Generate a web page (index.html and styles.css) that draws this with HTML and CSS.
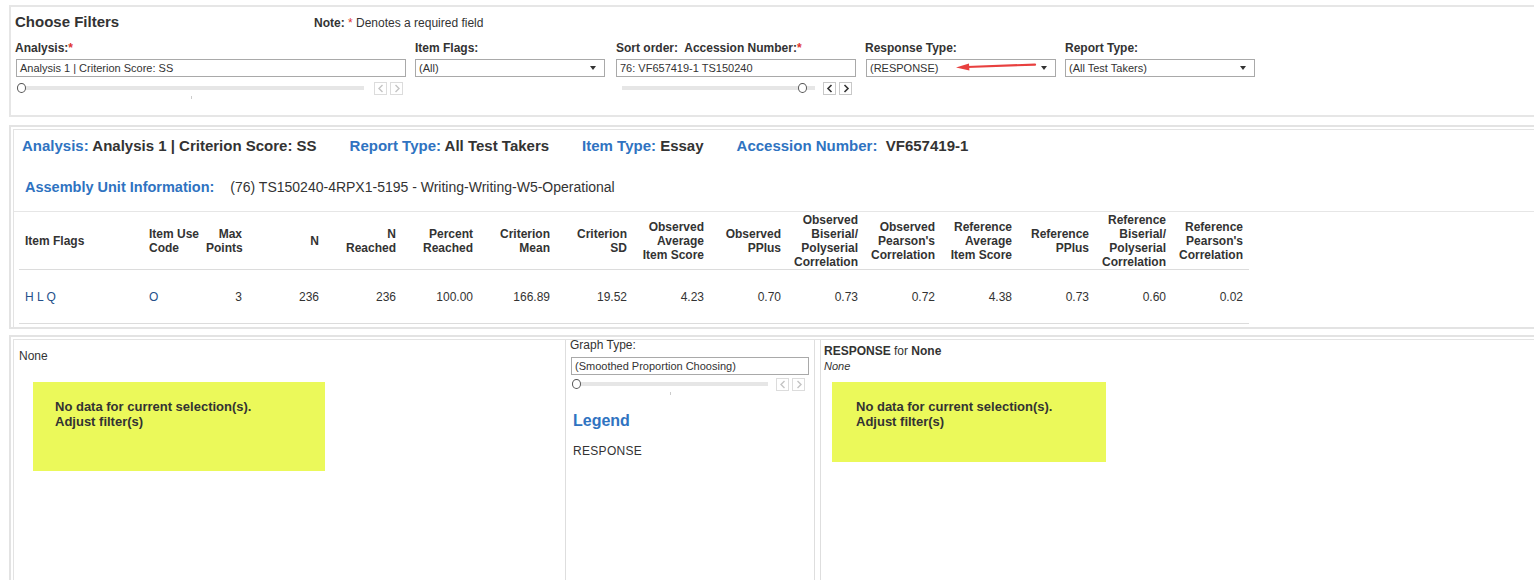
FILE: index.html
```html
<!DOCTYPE html>
<html>
<head>
<meta charset="utf-8">
<link rel="stylesheet" href="styles.css">
</head>
<body>
<div class="page">
  <section class="filters">
    <div class="filters-head">
      <h2 class="title">Choose Filters</h2>
      <span class="note"><b>Note:</b> <span class="req">*</span> Denotes a required field</span>
    </div>
    <div class="filter-row">
      <div class="fcol c1">
        <div class="flabel">Analysis:<span class="req">*</span></div>
        <div class="input w390">Analysis 1 | Criterion Score: SS</div>
        <div class="slider-row">
          <div class="track t1"><span class="knob"></span><span class="tick"></span></div>
          <div class="navbtns">
            <span class="nbtn dis"><svg width="8" height="9" viewBox="0 0 8 9"><polyline points="5.5,1 2,4.5 5.5,8" fill="none" stroke="#c4c4c4" stroke-width="1.4"/></svg></span>
            <span class="nbtn dis"><svg width="8" height="9" viewBox="0 0 8 9"><polyline points="2.5,1 6,4.5 2.5,8" fill="none" stroke="#c4c4c4" stroke-width="1.4"/></svg></span>
          </div>
        </div>
      </div>
      <div class="fcol c2">
        <div class="flabel">Item Flags:</div>
        <div class="input select w190">(All)</div>
      </div>
      <div class="fcol c3">
        <div class="flabel">Sort order:&nbsp; Accession Number:<span class="req">*</span></div>
        <div class="input w240">76: VF657419-1 TS150240</div>
        <div class="slider-row">
          <div class="track t3"><span class="knob end"></span></div>
          <div class="navbtns nb3">
            <span class="nbtn"><svg width="8" height="9" viewBox="0 0 8 9"><polyline points="5.5,1 2,4.5 5.5,8" fill="none" stroke="#333" stroke-width="1.6"/></svg></span>
            <span class="nbtn"><svg width="8" height="9" viewBox="0 0 8 9"><polyline points="2.5,1 6,4.5 2.5,8" fill="none" stroke="#333" stroke-width="1.6"/></svg></span>
          </div>
        </div>
      </div>
      <div class="fcol c4">
        <div class="flabel">Response Type:</div>
        <div class="input select w190 ml1">(RESPONSE)
          <svg class="red-arrow" width="82" height="12" viewBox="0 0 82 12"><line x1="12" y1="7" x2="80" y2="4.6" stroke="#e8403f" stroke-width="2.2" stroke-linecap="round"/><polygon points="1,7.4 14,3.6 14.4,10.4" fill="#e8403f"/></svg>
        </div>
      </div>
      <div class="fcol c5">
        <div class="flabel">Report Type:</div>
        <div class="input select w190">(All Test Takers)</div>
      </div>
    </div>
  </section>

  <section class="panel">
    <div class="panel-inner">
      <div class="summary">
        <span class="sitem"><span class="blue">Analysis:</span> Analysis 1 | Criterion Score: SS</span>
        <span class="sitem"><span class="blue">Report Type:</span> All Test Takers</span>
        <span class="sitem"><span class="blue">Item Type:</span> Essay</span>
        <span class="sitem"><span class="blue">Accession Number:</span>&nbsp; VF657419-1</span>
      </div>
      <div class="assembly">
        <span class="blue alabel">Assembly Unit Information:</span>
        <span class="avalue">(76) TS150240-4RPX1-5195 - Writing-Writing-W5-Operational</span>
      </div>
      <div class="sep"></div>
      <table class="stats">
        <colgroup>
          <col class="cw1"><col class="cw2"><col class="cw3">
          <col class="cw"><col class="cw"><col class="cw"><col class="cw"><col class="cw"><col class="cw"><col class="cw"><col class="cw"><col class="cw"><col class="cw"><col class="cw"><col class="cw"><col class="cw">
        </colgroup>
        <thead>
          <tr>
            <th class="left">Item Flags</th>
            <th class="left nopr">Item Use<br>Code</th>
            <th>Max<br>Points</th>
            <th>N</th>
            <th>N<br>Reached</th>
            <th>Percent<br>Reached</th>
            <th>Criterion<br>Mean</th>
            <th>Criterion<br>SD</th>
            <th>Observed<br>Average<br>Item Score</th>
            <th>Observed<br>PPlus</th>
            <th>Observed<br>Biserial/<br>Polyserial<br>Correlation</th>
            <th>Observed<br>Pearson's<br>Correlation</th>
            <th>Reference<br>Average<br>Item Score</th>
            <th>Reference<br>PPlus</th>
            <th>Reference<br>Biserial/<br>Polyserial<br>Correlation</th>
            <th>Reference<br>Pearson's<br>Correlation</th>
          </tr>
        </thead>
        <tbody>
          <tr>
            <td class="left link">H L Q</td>
            <td class="left link">O</td>
            <td>3</td>
            <td>236</td>
            <td>236</td>
            <td>100.00</td>
            <td>166.89</td>
            <td>19.52</td>
            <td>4.23</td>
            <td>0.70</td>
            <td>0.73</td>
            <td>0.72</td>
            <td>4.38</td>
            <td>0.73</td>
            <td>0.60</td>
            <td>0.02</td>
          </tr>
        </tbody>
      </table>
    </div>
  </section>

  <section class="panel panel3">
    <div class="panel-inner charts">
      <div class="ccol left-col">
        <div class="none">None</div>
        <div class="nodata nd1">No data for current selection(s).<br>Adjust filter(s)</div>
      </div>
      <div class="ccol mid-col">
        <div class="glabel">Graph Type:</div>
        <div class="input w238 ml1">(Smoothed Proportion Choosing)</div>
        <div class="slider-row">
          <div class="track tg"><span class="knob"></span><span class="tick"></span></div>
          <div class="navbtns nbg">
            <span class="nbtn dis"><svg width="8" height="9" viewBox="0 0 8 9"><polyline points="5.5,1 2,4.5 5.5,8" fill="none" stroke="#c4c4c4" stroke-width="1.4"/></svg></span>
            <span class="nbtn dis"><svg width="8" height="9" viewBox="0 0 8 9"><polyline points="2.5,1 6,4.5 2.5,8" fill="none" stroke="#c4c4c4" stroke-width="1.4"/></svg></span>
          </div>
        </div>
        <div class="legend">Legend</div>
        <div class="legend-item">RESPONSE</div>
      </div>
      <div class="ccol right-col">
        <div class="rtitle"><b>RESPONSE</b> for <b>None</b></div>
        <div class="rsub">None</div>
        <div class="nodata nd2">No data for current selection(s).<br>Adjust filter(s)</div>
      </div>
    </div>
  </section>
</div>
</body>
</html>
```

FILE: styles.css
```css
html, body {
  margin: 0;
  padding: 0;
  background: #fff;
  overflow: hidden;
}
body {
  font-family: "Liberation Sans", Arial, sans-serif;
  color: #333;
  width: 1534px;
  height: 580px;
}
.page {
  width: 1560px;
  padding: 5px 0 0 9px;
}

/* Filters panel */
.filters {
  box-sizing: border-box;
  height: 112px;
  border: 2px solid #e6e6e6;
  border-right: 0;
  padding: 6px 0 0 4px;
}
.filters-head {
  display: flex;
  align-items: baseline;
}
.title {
  margin: 0;
  width: 299px;
  font-size: 15px;
  line-height: 18px;
  font-weight: bold;
  color: #333;
}
.note {
  font-size: 12px;
  line-height: 14px;
}
.req { color: #e0342f; }
.filter-row {
  display: flex;
  margin-top: 10px;
}
.c1 { width: 400px; }
.c2 { width: 201px; }
.c3 { width: 249px; }
.c4 { width: 200px; }
.c5 { width: 200px; }
.flabel {
  font-size: 12px;
  line-height: 14px;
  font-weight: bold;
  margin-bottom: 4px;
}
.input {
  position: relative;
  box-sizing: border-box;
  height: 18px;
  border: 1px solid #a9a9a9;
  font-size: 11px;
  line-height: 16px;
  padding: 0 3px;
  color: #333;
  white-space: nowrap;
  background: #fff;
}
.w390 { width: 390px; margin-left: 1px; }
.w190 { width: 190px; }
.w240 { width: 240px; }
.w238 { width: 238px; }
.ml1 { margin-left: 1px; }
.select::after {
  content: "";
  position: absolute;
  right: 8px;
  top: 6px;
  border-left: 3.5px solid transparent;
  border-right: 3.5px solid transparent;
  border-top: 4px solid #333;
}
.red-arrow {
  position: absolute;
  left: 88px;
  top: 0;
}
.slider-row {
  display: flex;
  align-items: center;
  height: 14px;
  margin-top: 4px;
}
.track {
  position: relative;
  height: 4px;
  background: #e6e6e6;
}
.t1 { margin-left: 2px; width: 347px; }
.t3 { margin-left: 6px; width: 193px; }
.tg { margin-left: 6px; width: 196px; }
.knob {
  position: absolute;
  left: 0;
  top: -3px;
  box-sizing: border-box;
  width: 9px;
  height: 10px;
  border: 1px solid #555;
  border-radius: 50%;
  background: #fff;
}
.knob.end { left: 176px; }
.tick {
  position: absolute;
  left: 50%;
  top: 10px;
  width: 1px;
  height: 3px;
  background: #ccc;
}
.navbtns {
  display: flex;
  gap: 3px;
  margin-left: 10px;
}
.nb3 { margin-left: 8px; }
.nbg { margin-left: 8px; }
.nbtn {
  box-sizing: border-box;
  width: 13px;
  height: 13px;
  border: 1px solid #c8c8c8;
  display: flex;
  align-items: center;
  justify-content: center;
  background: #fff;
}
.nbtn.dis { border-color: #dcdcdc; }

/* Panels */
.panel {
  margin-top: 8px;
  border-top: 2px solid #e3e3e3;
  border-left: 2px solid #e3e3e3;
  border-bottom: 2px solid #e3e3e3;
}
.panel-inner {
  margin: 2px 0 0 2px;
  border-top: 1px solid #e3e3e3;
  border-left: 1px solid #e3e3e3;
  padding-bottom: 3px;
}
.summary {
  display: flex;
  gap: 33px;
  padding: 7px 0 0 8px;
  font-size: 15px;
  line-height: 18px;
  font-weight: bold;
  color: #333;
}
.blue { color: #2f73c1; }
.assembly {
  margin-top: 23px;
  padding-left: 11px;
  display: flex;
  align-items: baseline;
  line-height: 18px;
}
.alabel {
  font-size: 14.5px;
  font-weight: bold;
  margin-right: 16px;
}
.avalue {
  font-size: 14px;
  color: #333;
}
.sep {
  margin-top: 15px;
  height: 1px;
  background: #e6e6e6;
}
.stats {
  margin-left: 5px;
  border-collapse: collapse;
  table-layout: fixed;
  width: 1230px;
}
.cw1 { width: 124px; }
.cw2 { width: 57px; }
.cw3 { width: 48px; }
.cw { width: 77px; }
.stats th {
  height: 57px;
  padding: 0 6px;
  font-size: 12px;
  line-height: 14px;
  font-weight: bold;
  text-align: right;
  vertical-align: middle;
  border-bottom: 1px solid #dcdcdc;
  color: #333;
  white-space: nowrap;
}
.stats th.nopr { padding-right: 0; }
.stats td {
  height: 53px;
  padding: 0 6px;
  font-size: 12px;
  line-height: 14px;
  text-align: right;
  vertical-align: middle;
  border-bottom: 1px solid #dcdcdc;
  color: #333;
}
.stats .left { text-align: left; }
.stats td.link { color: #25508a; }

/* Charts panel */
.panel3 {
  margin-top: 6px;
  border-bottom: 0;
}
.charts {
  display: flex;
  height: 260px;
  padding-bottom: 0;
}
.ccol { box-sizing: border-box; }
.left-col {
  width: 551px;
  padding: 9px 0 0 5px;
}
.none {
  font-size: 12px;
  line-height: 14px;
}
.nodata {
  box-sizing: border-box;
  background: #ebf95a;
  font-size: 13px;
  line-height: 15px;
  font-weight: bold;
  color: #333;
  padding: 17px 0 0 22px;
}
.nd1 {
  margin: 19px 0 0 14px;
  width: 292px;
  height: 89px;
}
.mid-col {
  width: 250px;
  border-left: 1px solid #dedede;
  border-right: 1px solid #dedede;
  padding: 0 0 0 4px;
}
.glabel {
  font-size: 12px;
  line-height: 14px;
  margin-top: -2px;
}
.mid-col .input { margin-top: 5px; }
.mid-col .slider-row { margin-top: 2px; }
.mid-col .track { margin-left: 2px; }
.legend {
  margin-top: 20px;
  padding-left: 3px;
  font-size: 16px;
  line-height: 20px;
  font-weight: bold;
  color: #2f73c1;
}
.legend-item {
  margin-top: 13px;
  padding-left: 3px;
  font-size: 12px;
  line-height: 14px;
  letter-spacing: 0.3px;
}
.right-col {
  margin-left: 5px;
  border-left: 1px solid #dedede;
  padding: 4px 0 0 3px;
  flex: 1;
}
.rtitle {
  font-size: 12px;
  line-height: 14px;
}
.rsub {
  margin-top: 1px;
  font-size: 11px;
  line-height: 14px;
  font-style: italic;
}
.nd2 {
  margin: 9px 0 0 8px;
  width: 274px;
  height: 80px;
  padding-left: 24px;
}
```
